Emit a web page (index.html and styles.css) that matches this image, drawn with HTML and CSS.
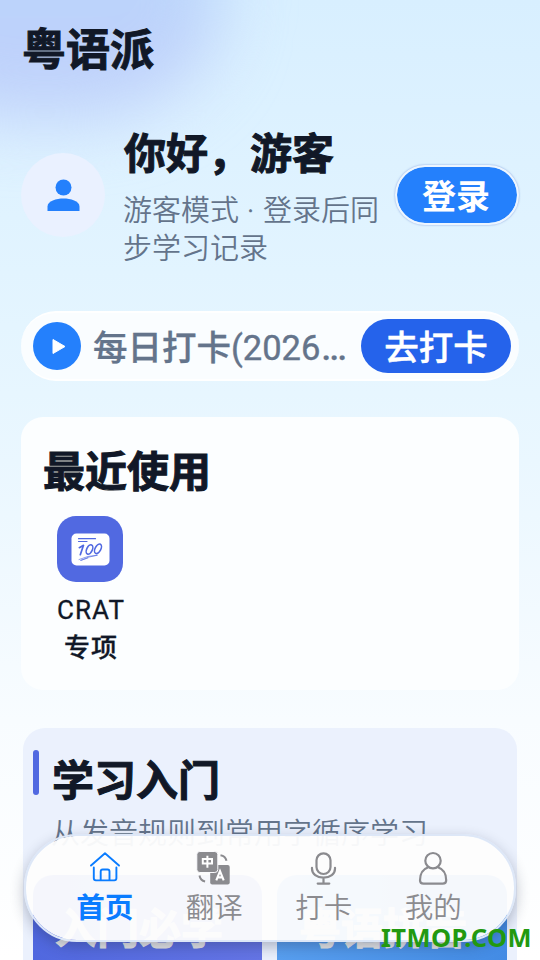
FILE: index.html
```html
<!DOCTYPE html>
<html lang="zh-CN">
<head>
<meta charset="utf-8">
<title>粤语派</title>
<link rel="stylesheet" href="styles.css">
</head>
<body>
<div class="app">
  <main class="page">
    <h1 class="brand">粤语派</h1>
    <section class="profile">
      <div class="avatar">
        <svg width="48" height="48" viewBox="0 0 48 48" fill="#2480fc"><circle cx="24.500" cy="16.500" r="8"/><path d="M8.500 40v-4.500c0-5.500 9-8 16-8s16 2.500 16 8v4.500z"/></svg>
      </div>
      <div class="who">
        <h2 class="heading">你好，游客</h2>
        <p class="sub">游客模式<span class="dot"> · </span>登录后同步学习记录</p>
      </div>
      <button class="login">登录</button>
    </section>
    <section class="checkin">
      <span class="play"><svg width="48" height="48" viewBox="0 0 48 48"><path d="M20 17.500l12 7-12 7z" fill="#fff" stroke="#fff" stroke-width="1" stroke-linejoin="round"/></svg></span>
      <span class="checkin-text">每日打卡<span class="date">(2026</span><span class="more">...</span></span>
      <button class="go">去打卡</button>
    </section>
    <section class="recent">
      <h2 class="heading">最近使用</h2>
      <div class="shortcut">
        <svg class="shortcut-icon" width="66" height="66" viewBox="0 0 66 66">
          <rect width="66" height="66" rx="19" fill="#5169e1"/>
          <rect x="14.500" y="17.500" width="38" height="32" rx="5" fill="#fff"/>
          <g fill="none" stroke="#5169e1" stroke-linecap="round" stroke-linejoin="round">
            <path d="M21.500 22.700H38.500M21.500 25.500H30" stroke-width="1.200"/>
            <path d="M22.300 31.700l4.200-2.400-3.200 9.400" stroke-width="1.700"/>
            <ellipse cx="32.500" cy="33.500" rx="2.800" ry="5" transform="rotate(25 32.500 33.500)" stroke-width="1.600"/>
            <ellipse cx="41" cy="32.800" rx="2.800" ry="5.200" transform="rotate(28 41 32.800)" stroke-width="1.600"/>
            <path d="M22 43.500Q31 39.500 40.500 39.200Q31 40.500 23.500 44.500L31 42" stroke-width=".65"/>
          </g>
        </svg>
        <span class="shortcut-label">CRAT<br>专项</span>
      </div>
    </section>
    <section class="learn">
      <div class="learn-head">
        <span class="accent"></span>
        <div>
          <h2 class="heading">学习入门</h2>
          <p class="sub">从发音规则到常用字循序学习</p>
        </div>
      </div>
      <div class="tiles">
        <div class="tile tile-indigo">入门必学</div>
        <div class="tile tile-blue">粤语拼音</div>
      </div>
    </section>
  </main>
  <nav class="tabs">
    <a class="tab active">
      <svg width="36" height="36" viewBox="0 0 36 36" fill="none" stroke="#0a7cff" stroke-width="1.900" stroke-linecap="round" stroke-linejoin="round"><path d="M4 15.500L18 3.200 32 15.500M6.800 17.500V28.300Q6.800 30.400 8.900 30.400H27.300Q29.400 30.400 29.400 28.300V17.500M13.700 30V21.500Q13.700 19.500 15.700 19.500H20.500Q22.500 19.500 22.500 21.500V30"/></svg>
      <span>首页</span>
    </a>
    <a class="tab">
      <svg width="36" height="36" viewBox="0 0 36 36"><rect x="14.200" y="15" width="19.500" height="19.600" rx="2" fill="#8b8b8f"/><rect x="0.800" y="1.500" width="21" height="21" rx="3" fill="#8b8b8f" stroke="#fbfbfe" stroke-width="1"/><path d="M24.500 5.200q5 .8 6 5.600M3.500 25.500q.8 5 5.600 6" fill="none" stroke="#8b8b8f" stroke-width="2"/><path d="M6.800 8.900h9.200v4.600H6.800zM11.400 5.800v12" fill="none" stroke="#fff" stroke-width="2"/><path d="M20.300 30.300l3.700-9.300 3.700 9.300M21.700 27.400h4.800" fill="none" stroke="#fff" stroke-width="2.100"/></svg>
      <span>翻译</span>
    </a>
    <a class="tab">
      <svg width="36" height="36" viewBox="0 0 36 36" fill="none" stroke="#8b8b8f" stroke-width="2.200" stroke-linecap="round"><rect x="10.500" y="3.300" width="14" height="20.700" rx="7"/><path d="M6 17.800v1c0 5.300 4.700 8.900 11.500 8.900s11.500-3.600 11.500-8.900v-1M17.500 28.500v4.800M11.700 33.600h11.600"/></svg>
      <span>打卡</span>
    </a>
    <a class="tab">
      <svg width="36" height="36" viewBox="0 0 36 36" fill="none" stroke="#8b8b8f" stroke-width="2.200"><circle cx="18" cy="10.700" r="7.700"/><path d="M13.300 17.200C8 19 5 23.700 5 30.200q0 3.500 3.500 3.500H27.700Q31.200 33.700 31.200 30.200c0-6.500-3-11.200-8.300-13"/></svg>
      <span>我的</span>
    </a>
  </nav>
  <span class="watermark">ITMOP.COM</span>
</div>
</body>
</html>
```
FILE: styles.css
```css
* { box-sizing: border-box; }

body {
  margin: 0;
  font-family: Roboto, "Noto Sans CJK SC", sans-serif;
  color: #111827;
}

h1, h2, p { margin: 0; }

button {
  border: 0;
  padding: 0;
  font: inherit;
  color: #fff;
  flex: none;
}

.app {
  position: relative;
  width: 540px;
  height: 960px;
  overflow: hidden;
  background: linear-gradient(180deg, #d8efff 0%, #e4f5ff 34%, #eaf7ff 48%, #f8fcff 75%, #fff 100%);
}

.app::before {
  content: "";
  position: absolute;
  left: -130px;
  top: -150px;
  width: 350px;
  height: 270px;
  border-radius: 42%;
  background: linear-gradient(180deg, #bbd5fb 55%, #bed0fb 68%, #c0d3fb);
  filter: blur(33px);
}

.page {
  position: relative;
  padding: 21px 21px 0;
}

.brand {
  padding-left: 1px;
  font-size: 44px;
  line-height: 60px;
  font-weight: 700;
  -webkit-text-stroke: 1px;
}

.heading {
  padding-left: 1px;
  font-size: 42px;
  line-height: 60px;
  font-weight: 700;
  -webkit-text-stroke: 1px;
}

.profile {
  display: flex;
  align-items: center;
  height: 145px;
  margin-top: 41px;
}

.avatar {
  display: grid;
  place-items: center;
  width: 84px;
  height: 84px;
  margin-right: 18px;
  flex: none;
  border-radius: 50%;
  background: #eaf1ff;
}

.who {
  flex: 1;
  padding-top: 4px;
}

.sub {
  font-size: 29px;
  line-height: 38.500px;
  font-weight: 350;
  color: #64748b;
}

.dot {
  letter-spacing: .9px;
  -webkit-text-stroke: .6px;
}

.who .sub {
  width: 262px;
  margin-right: -4px;
  padding-top: 7px;
}

.login {
  width: 124px;
  height: 60px;
  border: 2px solid #edf5ff;
  border-radius: 30px;
  background: #2480fc;
  background-clip: padding-box;
  box-shadow: 0 0 2px rgba(36, 80, 190, .5);
  font-size: 34px;
  line-height: 54px;
  font-weight: 700;
  padding: 3px 2px 0 0;
}

.checkin {
  display: flex;
  align-items: center;
  height: 70px;
  margin-top: 44px;
  padding: 0 8px 0 12px;
  border-radius: 35px;
  background: #fafdff;
  border-top: 2px solid #fff;
  border-bottom: 2px solid #fff;
}

.play {
  width: 48px;
  height: 48px;
  border-radius: 50%;
  background: #2480fc;
}

.checkin-text {
  flex: 1;
  padding: 4px 0 0 12px;
  white-space: nowrap;
  font-size: 34.500px;
  line-height: 50px;
  font-weight: 500;
  color: #64748b;
  -webkit-text-stroke: .3px;
}

.date {
  font-weight: 400;
  -webkit-text-stroke: .4px;
}

.more {
  margin-left: 1px;
  letter-spacing: -1.500px;
}

.go {
  width: 150px;
  height: 54px;
  padding-top: 4px;
  border-radius: 27px;
  background: #2563eb;
  font-size: 34.500px;
  line-height: 50px;
  font-weight: 500;
  -webkit-text-stroke: .5px;
}

.recent {
  height: 273px;
  margin-top: 36px;
  padding: 26px 21px 0;
  border-radius: 22px;
  background: #fcfeff;
}

.shortcut {
  display: flex;
  flex-direction: column;
  align-items: center;
  width: 96px;
  margin-top: 13px;
}

.shortcut-label {
  margin: 9px 0 0 2px;
  font-size: 26px;
  line-height: 38px;
  font-weight: 500;
  letter-spacing: 1px;
  text-align: center;
  -webkit-text-stroke: .3px;
}

.shortcut-label::first-line { font-weight: 450; }

.learn {
  height: 300px;
  margin: 38px 2px 0;
  padding: 22px 10px;
  border-radius: 22px;
  background: #ebf1fd;
}

.learn-head {
  display: flex;
  gap: 12px;
  height: 125px;
}

.learn-head .heading { padding-top: 2px; }

.learn-head .sub { padding-top: 3px; }

.accent {
  width: 6px;
  height: 45px;
  border-radius: 3px;
  background: #5169e1;
}

.tiles {
  display: grid;
  grid-template-columns: 229px 230px;
  gap: 15px;
}

.tile {
  height: 140px;
  padding: 25px 22px;
  border-radius: 20px;
  color: #e8e8e8;
  font-size: 42px;
  line-height: 60px;
  font-weight: 700;
  white-space: nowrap;
  -webkit-text-stroke: 1px;
}

.tile-indigo { background: linear-gradient(90deg, #5068df, #6575e6); }
.tile-blue { background: linear-gradient(90deg, #589ff0, #438be4); }

.tabs {
  position: absolute;
  left: 24px;
  top: 834px;
  display: flex;
  width: 492px;
  height: 108px;
  padding: 14px 26px 0 24px;
  border: 2px solid #dde7f7;
  border-radius: 53px;
  background: rgba(253, 253, 253, .955);
  background-clip: padding-box;
  box-shadow: 0 5px 14px rgba(30, 40, 70, .3);
}

.tab {
  flex: 1;
  display: flex;
  flex-direction: column;
  align-items: center;
  font-size: 28.500px;
  line-height: 45px;
  font-weight: 350;
  color: #8b8b8f;
}

.active {
  font-weight: 700;
  color: #0a7cff;
}

.watermark {
  position: absolute;
  left: 381px;
  top: 920px;
  font: 700 25.500px/34px "Noto Sans", sans-serif;
  letter-spacing: .4px;
  color: #229910;
}
```
